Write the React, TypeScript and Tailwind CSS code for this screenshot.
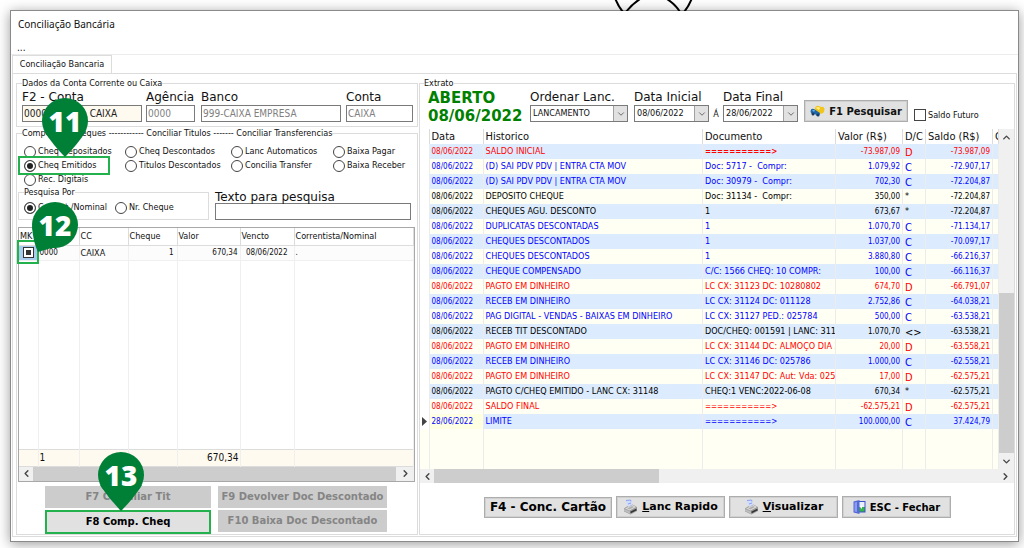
import React, { useState } from 'react';
import clsx from 'clsx';
import { ChevronDown, ChevronLeft, ChevronRight, ChevronUp } from 'lucide-react';

type Tone = 'red' | 'blue' | 'black';

interface Entry {
  date: string;
  history: string;
  document: string;
  value: string;
  dc: string;
  balance: string;
  tone: Tone;
}

const entry = (history: string, document: string, value: string, dc: string, balance: string, tone: Tone, date = '08/06/2022'): Entry => ({
  date, history, document, value, dc, balance, tone,
});

const ENTRIES: Entry[] = [
  entry('SALDO INICIAL', '===========>', '-73.987,09', 'D', '-73.987,09', 'red'),
  entry('(D) SAI PDV PDV | ENTRA CTA MOV', 'Doc: 5717 -  Compr:', '1.079,92', 'C', '-72.907,17', 'blue'),
  entry('(D) SAI PDV PDV | ENTRA CTA MOV', 'Doc: 30979 -  Compr:', '702,30', 'C', '-72.204,87', 'blue'),
  entry('DEPOSITO CHEQUE', 'Doc: 31134 -  Compr:', '350,00', '*', '-72.204,87', 'black'),
  entry('CHEQUES AGU. DESCONTO', '1', '673,67', '*', '-72.204,87', 'black'),
  entry('DUPLICATAS DESCONTADAS', '1', '1.070,70', 'C', '-71.134,17', 'blue'),
  entry('CHEQUES DESCONTADOS', '1', '1.037,00', 'C', '-70.097,17', 'blue'),
  entry('CHEQUES DESCONTADOS', '1', '3.880,80', 'C', '-66.216,37', 'blue'),
  entry('CHEQUE COMPENSADO', 'C/C: 1566 CHEQ: 10 COMPR:', '100,00', 'C', '-66.116,37', 'blue'),
  entry('PAGTO EM DINHEIRO', 'LC CX: 31123 DC: 10280802', '674,70', 'D', '-66.791,07', 'red'),
  entry('RECEB EM DINHEIRO', 'LC CX: 31124 DC: 011128', '2.752,86', 'C', '-64.038,21', 'blue'),
  entry('PAG DIGITAL - VENDAS - BAIXAS EM DINHEIRO', 'LC CX: 31127 PED.: 025784', '500,00', 'C', '-63.538,21', 'blue'),
  entry('RECEB TIT DESCONTADO', 'DOC/CHEQ: 001591 | LANC: 3114', '1.070,70', '<>', '-63.538,21', 'black'),
  entry('PAGTO EM DINHEIRO', 'LC CX: 31144 DC: ALMOÇO DIA 2', '20,00', 'D', '-63.558,21', 'red'),
  entry('RECEB EM DINHEIRO', 'LC CX: 31146 DC: 025786', '1.000,00', 'C', '-62.558,21', 'blue'),
  entry('PAGTO EM DINHEIRO', 'LC CX: 31147 DC: Aut: Vda: 02578', '17,00', 'D', '-62.575,21', 'red'),
  entry('PAGTO C/CHEQ EMITIDO - LANC CX: 31148', 'CHEQ:1 VENC:2022-06-08', '670,34', '*', '-62.575,21', 'black'),
  entry('SALDO FINAL', '===========>', '-62.575,21', 'D', '-62.575,21', 'red'),
  entry('LIMITE', '===========>', '100.000,00', 'C', '37.424,79', 'blue', '28/06/2022'),
];

const toneClass: Record<Tone, string> = {
  red: 'text-[#ff0000]',
  blue: 'text-[#0000ff]',
  black: 'text-black',
};

const Marker: React.FC<{ n: number; tip: 'down' | 'left'; className: string }> = ({ n, tip, className }) => (
  <div className={clsx('pointer-events-none absolute z-20 h-[60px] w-[48px]', className)}>
    <svg viewBox="0 0 48 60" className="absolute inset-0 h-full w-full" fill="#008037">
      <circle cx="24" cy="23" r="23" />
      {tip === 'down' ? <path d="M3 33 Q12 47 24 59 Q37 46 45 33 Z" /> : <path d="M1 24 Q2 40 7 50 Q18 46 33 44 Z" />}
    </svg>
    <span className="relative block text-center font-['Open_Sans',sans-serif] text-[28px] leading-[46px] font-extrabold text-white">{n}</span>
  </div>
);

const RadioOption: React.FC<{ name: string; label: string; checked: boolean; onSelect: () => void }> = ({ name, label, checked, onSelect }) => (
  <label className="flex h-[14px] items-center gap-[2px] whitespace-nowrap">
    <input
      type="radio"
      name={name}
      checked={checked}
      onChange={onSelect}
      className="h-3 w-3 shrink-0 appearance-none rounded-full border border-[#444] bg-white checked:bg-[#222] checked:shadow-[inset_0_0_0_2px_white]"
    />
    {label}
  </label>
);

const Field: React.FC<{ id: string; label: string; value: string; className: string; inputClass?: string }> = ({ id, label, value, className, inputClass = 'bg-white text-[#808080]' }) => (
  <div className={className}>
    <label htmlFor={id} className="block h-4 font-['DejaVu_Sans',sans-serif] text-[12px] leading-4 whitespace-nowrap">{label}</label>
    <input id={id} defaultValue={value} readOnly className={clsx('block h-[17px] w-full border border-[#7a7a7a] px-px text-[10px]', inputClass)} />
  </div>
);

const SelectField: React.FC<{ id: string; label: string; value: string; className: string }> = ({ id, label, value, className }) => (
  <div className={className}>
    <label htmlFor={id} className="block h-4 font-['DejaVu_Sans',sans-serif] text-[12px] leading-4 whitespace-nowrap">{label}</label>
    <div className="relative">
      <select id={id} defaultValue={value} className="block h-[17px] w-full appearance-none border border-[#7a7a7a] bg-white pl-[2px] text-[9px]">
        <option>{value}</option>
      </select>
      <span className="pointer-events-none absolute inset-y-px right-px flex w-[14px] items-center justify-center border-l border-[#a0a0a0] bg-[#e1e1e1]">
        <ChevronDown size={10} className="text-[#555]" />
      </span>
    </div>
  </div>
);

const HScroll: React.FC<{ thumb: string }> = ({ thumb }) => (
  <div className="flex h-[14px] bg-[#f0f0f0] text-[#444]">
    <button aria-label="Rolar para a esquerda" className="flex w-[14px] items-center justify-center"><ChevronLeft size={11} strokeWidth={3} /></button>
    <div className="flex-1"><div className={clsx('h-full bg-[#cdcdcd]', thumb)} /></div>
    <button aria-label="Rolar para a direita" className="flex w-[18px] items-center justify-center"><ChevronRight size={11} strokeWidth={3} /></button>
  </div>
);

const CoinsIcon = () => (
  <svg width="15" height="12" viewBox="0 0 15 12">
    <path d="M5 3 Q6 0 9 1 L11 2 Q14 1 14.500 4 L14 7 Q12 10 8 8 L5 6 Z" fill="#f2c51c" />
    <path d="M6 3 Q8 1 10 3 L9 5 Z" fill="#fff08a" />
    <path d="M0.500 6 Q1 3 4 4 L7 6 L10 8 Q10 11 7 11 L5 9 Q1 10 0.500 6 Z" fill="#2167a8" />
    <path d="M2 5 L5 5 L4 7 Z" fill="#67b2e6" />
    <circle cx="3" cy="9" r="1.500" fill="#183d68" />
    <circle cx="8" cy="10" r="1.500" fill="#183d68" />
  </svg>
);

const PrinterIcon = () => (
  <svg width="15" height="16" viewBox="0 0 15 16">
    <path d="M2.500 1.500 L7.500 1 L9.500 6 L5 8 Z" fill="#cfdbff" />
    <path d="M3 1.500 L7.500 1 L8 2.500 M5 5 L8 4" fill="none" stroke="#88a2f0" strokeWidth="1" />
    <path d="M1 9.500 L4.500 7 L5 8 L9.500 5.500 L14 8 L14 12 L7.500 15.500 L1 12.500 Z" fill="#9c9c9c" />
    <path d="M2 9.500 L9.500 6 L13 8 L6.500 11.500 Z" fill="#dedede" />
    <path d="M4 9.500 L9 7 L11 8 L6.500 10.500 Z" fill="#b0b0b0" />
    <path d="M1 10 L7 12.500 L7.500 15 L1 12 Z" fill="#bdbdbd" />
    <path d="M7.500 13.500 L13.500 10.500" stroke="#333" strokeWidth="1.500" />
  </svg>
);

const DoorIcon = () => (
  <svg width="13" height="14" viewBox="0 0 13 14">
    <path d="M5 1 H12.500 V12.500 H5 Z" fill="#3b4fc4" />
    <path d="M6 2 H11.500 V7 H6 Z" fill="#e6f0ff" />
    <path d="M6 7 H11.500 V11.500 H6 Z" fill="#33b34a" />
    <path d="M7 7 L9 5 L9 9 Z" fill="#fff" />
    <path d="M0.500 1.500 L6.500 0 L6.500 14 L0.500 12.500 Z" fill="#5468d6" />
    <path d="M1.500 2.500 L4 2 L4 12 L1.500 11.500 Z" fill="#8a9cf0" />
  </svg>
);

const ToolButton: React.FC<{ className: string; children: React.ReactNode }> = ({ className, children }) => (
  <button className={clsx("flex items-center justify-center gap-1 border border-[#adadad] bg-[#e1e1e1] font-['DejaVu_Sans',sans-serif] font-bold whitespace-nowrap shadow-[inset_0_0_0_1px_#d0d0d0]", className)}>
    {children}
  </button>
);

const TITLE_OPTIONS = [
  'Cheq Depositados', 'Cheq Descontados', 'Lanc Automaticos', 'Baixa Pagar',
  'Cheq Emitidos', 'Titulos Descontados', 'Concilia Transfer', 'Baixa Receber',
  'Rec. Digitais',
];

function ChequePanel() {
  const [kind, setKind] = useState('Cheq Emitidos');
  const [searchBy, setSearchBy] = useState('Corrent./Nominal');
  const disabledBtn = "bg-[#cccccc] text-[#858585] font-['DejaVu_Sans',sans-serif] text-[10px] font-bold whitespace-nowrap";

  return (
    <div className="flex w-[402px] shrink-0 flex-col">
      <fieldset className="border border-[#dcdcdc] pb-1 pl-[5px]">
        <legend className="leading-3">Dados da Conta Corrente ou Caixa</legend>
        <div className="flex">
          <Field id="conta" label="F2 - Conta" value="0000 - CONTA CAIXA" className="w-[120px]" inputClass="bg-[#fffaf0] text-[#1a1a1a]" />
          <Field id="agencia" label="Agência" value="0000" className="ml-1 w-[49px]" />
          <Field id="banco" label="Banco" value="999-CAIXA EMPRESA" className="ml-[6px] w-[140px]" />
          <Field id="numero" label="Conta" value="CAIXA" className="ml-[5px] w-[67px]" />
        </div>
      </fieldset>

      <fieldset className="flex-1 border border-[#dcdcdc]">
        <legend className="ml-[5px] leading-3 whitespace-pre">Compensar Cheques ------------ Conciliar Titulos ------- Conciliar Transferencias</legend>
        <div className="relative grid h-[47px] auto-rows-[14px] grid-cols-[101px_106px_102px_auto] pt-[6px] pl-[7px]">
          {TITLE_OPTIONS.map(option => (
            <RadioOption key={option} name="kind" label={option} checked={kind === option} onSelect={() => setKind(option)} />
          ))}
          <div className="pointer-events-none absolute top-[17px] left-px h-[19px] w-[92px] border-2 border-[#22b14c]" />
          <Marker n={11} tip="down" className="-top-[41px] left-[24px]" />
        </div>

        <div className="flex gap-[6px] pr-[6px] pl-px">
          <fieldset className="relative w-[191px] border border-[#dcdcdc] pb-1 pl-[5px]">
            <legend className="leading-3">Pesquisa Por</legend>
            <div className="flex gap-2 pt-[3px]">
              <RadioOption name="search" label="Corrent./Nominal" checked={searchBy === 'Corrent./Nominal'} onSelect={() => setSearchBy('Corrent./Nominal')} />
              <RadioOption name="search" label="Nr. Cheque" checked={searchBy === 'Nr. Cheque'} onSelect={() => setSearchBy('Nr. Cheque')} />
            </div>
            <Marker n={12} tip="left" className="top-[4px] left-[12px]" />
          </fieldset>
          <div className="flex-1 pt-px">
            <label htmlFor="texto" className="block h-4 font-['DejaVu_Sans',sans-serif] text-[12px] leading-5">Texto para pesquisa</label>
            <input id="texto" className="block h-[17px] w-full border border-[#7a7a7a] bg-white px-1" />
          </div>
        </div>

        <div className="relative mt-[7px] mr-[2px] ml-px border border-[#a8a8a8]">
          <table className="w-full table-fixed border-collapse text-left [&_td]:border-r [&_td]:border-[#efefef] [&_td]:px-px [&_th]:border-r [&_th]:border-[#dcdcdc] [&_th]:px-px [&_th]:font-normal">
            <colgroup>
              <col className="w-[19px]" /><col className="w-[41px]" /><col className="w-[49px]" /><col className="w-[49px]" />
              <col className="w-[63px]" /><col className="w-[54px]" /><col />
            </colgroup>
            <thead>
              <tr className="h-[17px] border-b border-[#dcdcdc]">
                <th className="whitespace-nowrap">MK</th><th></th><th>CC</th><th>Cheque</th><th>Valor</th><th>Vencto</th><th>Correntista/Nominal</th>
              </tr>
            </thead>
            <tbody className="text-[8px]">
              <tr className="h-[15px] border-b border-[#efefef] bg-[#fcfcfc]">
                <td className="bg-[#a9cbf0]">
                  <input type="checkbox" aria-label="Marcar cheque" defaultChecked className="mx-auto block h-[11px] w-[11px] appearance-none border border-[#333] bg-[#333] shadow-[inset_0_0_0_2px_white]" />
                </td>
                <td>0000</td>
                <td className="text-[9px] leading-3">CAIXA</td>
                <td><p className="pr-[2px] text-right">1</p></td>
                <td><p className="pr-px text-right">670,34</p></td>
                <td><p className="pr-[5px] text-right">08/06/2022</p></td>
                <td>.</td>
              </tr>
              <tr className="h-[189px]"><td /><td /><td /><td /><td /><td /><td /></tr>
            </tbody>
            <tfoot>
              <tr className="h-[17px] border-y border-[#dcdcdc] bg-[#fffaf0] text-[10px]">
                <td /><td>1</td><td /><td /><td className="text-right">670,34</td><td /><td />
              </tr>
            </tfoot>
          </table>
          <HScroll thumb="w-full" />
          <div className="pointer-events-none absolute top-[12px] -left-[2px] h-[24px] w-[22px] border-2 border-[#22b14c]" />
        </div>

        <div className="mt-1 ml-[28px] grid grid-cols-[166px_169px] gap-x-[7px] gap-y-[2px]">
          <button disabled className={clsx(disabledBtn, 'h-[22px]')}>F7 Conciliar Tit</button>
          <button disabled className={clsx(disabledBtn, 'h-[22px]')}>F9 Devolver Doc Descontado</button>
          <div className="relative">
            <button className="h-[24px] w-full border-2 border-[#22b14c] bg-[#e1e1e1] font-['DejaVu_Sans',sans-serif] text-[10px] font-bold text-black">F8 Comp. Cheq</button>
            <Marker n={13} tip="down" className="-top-[58px] left-[52px]" />
          </div>
          <button disabled className={clsx(disabledBtn, 'h-[22px]')}>F10 Baixa Doc Descontado</button>
        </div>
      </fieldset>
    </div>
  );
}

function StatementPanel() {
  return (
    <fieldset className="min-w-0 flex-1 border border-[#dcdcdc]">
      <legend className="ml-1 leading-3">Extrato</legend>
      <div className="flex h-[33px] items-end pl-2">
        <div className="-mb-[3px] w-[102px] font-['DejaVu_Sans',sans-serif] text-[15px] leading-[18px] font-bold whitespace-nowrap text-[#008000]">
          <p>ABERTO</p>
          <p>08/06/2022</p>
        </div>
        <SelectField id="ordenar" label="Ordenar Lanc." value="LANCAMENTO" className="w-[98px]" />
        <SelectField id="inicial" label="Data Inicial" value="08/06/2022" className="ml-[6px] w-[75px]" />
        <span className="w-[14px] text-center leading-4">Á</span>
        <SelectField id="final" label="Data Final" value="28/06/2022" className="w-[75px]" />
        <ToolButton className="ml-[6px] h-[22px] w-[104px] text-[10px]"><CoinsIcon />F1 Pesquisar</ToolButton>
        <label className="ml-[6px] flex items-center gap-[2px] whitespace-nowrap">
          <input type="checkbox" className="h-3 w-3 appearance-none border border-[#444] bg-white" />
          Saldo Futuro
        </label>
      </div>

      <div className="mt-[7px] flex">
        <div className="min-w-0 flex-1 bg-[#fffff4]">
          <table className="w-full table-fixed border-collapse text-left [&_td]:overflow-hidden [&_td]:border-r [&_td]:border-[#ececec] [&_td]:px-[2px] [&_td]:whitespace-pre [&_th]:overflow-hidden [&_th]:border-r [&_th]:border-[#dcdcdc] [&_th]:px-[2px] [&_th]:font-normal [&_th]:whitespace-nowrap">
            <colgroup>
              <col className="w-[9px]" /><col className="w-[54px]" /><col /><col className="w-[133px]" />
              <col className="w-[67px]" /><col className="w-[23px]" /><col className="w-[67px]" /><col className="w-[6px]" />
            </colgroup>
            <thead>
              <tr className="h-[15px] bg-white text-[11px] leading-[15px]">
                <th></th><th>Data</th><th>Historico</th><th>Documento</th><th>Valor (R$)</th><th>D/C</th><th>Saldo (R$)</th><th>C</th>
              </tr>
            </thead>
            <tbody className="leading-[15px]">
              {ENTRIES.map((e, i) => {
                const current = i === ENTRIES.length - 1;
                return (
                  <tr key={i} className={clsx('h-[15px]', toneClass[e.tone], i % 2 === 0 ? 'bg-[#dcecfe]' : 'bg-[#fffff4]')}>
                    <td className="bg-white">
                      {current && <svg width="5" height="9" viewBox="0 0 5 9" fill="#444"><path d="M0 0 L5 4.500 L0 9 Z" /></svg>}
                    </td>
                    <td className={clsx('text-[8px]', current && 'bg-[#ffffe1]')}>{e.date}</td>
                    <td>{e.history}</td>
                    <td className={clsx(e.document.startsWith('=') && 'text-[8px]', i === 0 && 'font-bold')}>{e.document}</td>
                    <td className="text-right text-[8px]">{e.value}</td>
                    <td className={e.dc === '*' ? '' : 'pt-[2px] text-[11px] leading-[13px]'}>{e.dc}</td>
                    <td className="text-right text-[8px]">{e.balance}</td>
                    <td></td>
                  </tr>
                );
              })}
              <tr className="h-[40px]"><td /><td /><td /><td /><td /><td /><td /><td /></tr>
            </tbody>
          </table>
        </div>
        <div className="flex w-[15px] flex-col bg-[#f0f0f0] text-[#444]">
          <button aria-label="Rolar para cima" className="flex h-4 items-center justify-center"><ChevronUp size={11} strokeWidth={3} /></button>
          <div className="flex flex-1 flex-col justify-end"><div className="h-[52%] bg-[#cdcdcd]" /></div>
          <button aria-label="Rolar para baixo" className="flex h-4 items-center justify-center"><ChevronDown size={11} strokeWidth={3} /></button>
        </div>
      </div>
      <HScroll thumb="w-2/5" />

      <div className="mt-[13px] flex items-center gap-1 pl-[64px] text-black">
        <ToolButton className="h-[21px] w-[128px] text-[12px]">F4 - Conc. Cartão</ToolButton>
        <ToolButton className="h-[22px] w-[109px] text-[11px]"><PrinterIcon /><span><u>L</u>anc Rapido</span></ToolButton>
        <ToolButton className="h-[22px] w-[109px] text-[11px]"><PrinterIcon /><span><u>V</u>isualizar</span></ToolButton>
        <ToolButton className="h-[22px] w-[109px] text-[10px]"><DoorIcon />ESC - Fechar</ToolButton>
      </div>
    </fieldset>
  );
}

export default function App() {
  return (
    <div className="relative flex min-h-screen flex-col overflow-hidden bg-white pt-[10px] pr-[5px] pb-[6px] pl-[10px] font-['DejaVu_Sans_Condensed','DejaVu_Sans',sans-serif] text-[9px] text-[#111]">
      <main className="flex flex-1 flex-col border border-[#8a8a8a] bg-white shadow-[0_2px_12px_rgba(0,0,0,0.4)]">
        <h1 className="pt-[5px] pl-[7px] font-['Noto_Sans',sans-serif] text-[10px] leading-4">Conciliação Bancária</h1>
        <button className="block self-start pt-[10px] pl-[6px] text-[10px] leading-3" aria-label="Menu">...</button>
        <div className="border-t border-[#ececec] px-px">
          <button className="-mb-px block h-[19px] w-[100px] border border-b-0 border-[#dcdcdc] bg-white">Conciliação Bancaria</button>
        </div>
        <div className="mx-px mb-[4px] flex flex-1 gap-px border border-[#dcdcdc] pt-[3px] pr-px pb-px pl-[3px]">
          <ChequePanel />
          <StatementPanel />
        </div>
      </main>
      <svg className="absolute top-0 left-[60%]" width="80" height="11" viewBox="0 0 80 11" fill="none" stroke="#000" strokeWidth="2">
        <path d="M1 -2 Q4 6 9 12 M12 12 Q17 5 26 -1 M53 -1 Q62 5 66 12 M70 12 Q75 6 78 -2" />
      </svg>
    </div>
  );
}
